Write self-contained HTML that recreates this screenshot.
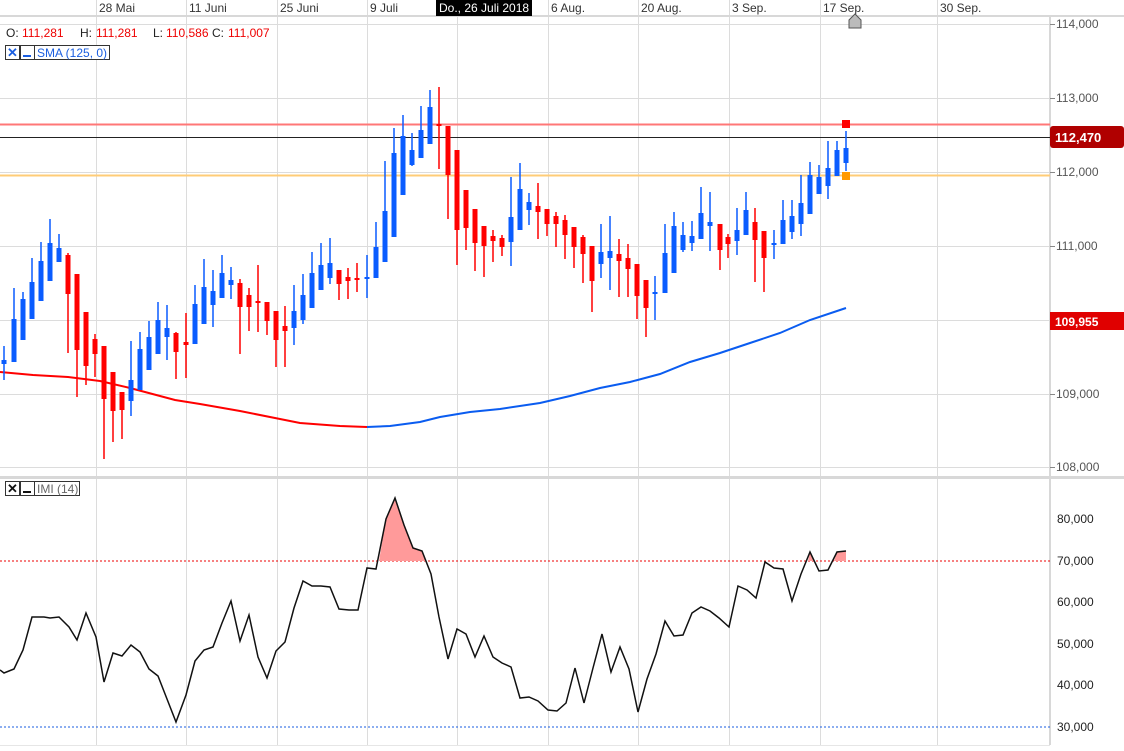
<!DOCTYPE html>
<html><head><meta charset="utf-8"><style>
html,body{margin:0;padding:0;background:#fff;width:1124px;height:751px;overflow:hidden}
svg{display:block;font-family:"Liberation Sans",Arial,sans-serif}
</style></head><body>
<svg id="c" width="1124" height="751" viewBox="0 0 1124 751" xmlns="http://www.w3.org/2000/svg">
<rect width="1124" height="751" fill="#fff"/>
<g stroke="#dcdcdc" stroke-width="1">
<line x1="96.5" y1="0" x2="96.5" y2="745"/><line x1="186.5" y1="0" x2="186.5" y2="745"/><line x1="277.5" y1="0" x2="277.5" y2="745"/><line x1="367.5" y1="0" x2="367.5" y2="745"/><line x1="457.5" y1="16" x2="457.5" y2="745"/><line x1="548.5" y1="0" x2="548.5" y2="745"/><line x1="638.5" y1="0" x2="638.5" y2="745"/><line x1="729.5" y1="0" x2="729.5" y2="745"/><line x1="820.5" y1="0" x2="820.5" y2="745"/><line x1="937.5" y1="0" x2="937.5" y2="745"/>
<line x1="0" y1="24.5" x2="1050" y2="24.5"/><line x1="0" y1="98.5" x2="1050" y2="98.5"/><line x1="0" y1="172.5" x2="1050" y2="172.5"/><line x1="0" y1="246.5" x2="1050" y2="246.5"/><line x1="0" y1="320.5" x2="1050" y2="320.5"/><line x1="0" y1="394.5" x2="1050" y2="394.5"/><line x1="0" y1="467.5" x2="1050" y2="467.5"/>
</g>
<line x1="0" y1="16" x2="1124" y2="16" stroke="#d8d8d8" stroke-width="2"/>
<line x1="0" y1="477.5" x2="1124" y2="477.5" stroke="#d8d8d8" stroke-width="3"/>
<line x1="1050" y1="16" x2="1050" y2="745" stroke="#d8d8d8" stroke-width="2"/>
<g fill="#333" font-size="12">
<text x="99" y="12">28 Mai</text><text x="189" y="12">11 Juni</text><text x="280" y="12">25 Juni</text><text x="370" y="12">9 Juli</text><text x="551" y="12">6 Aug.</text><text x="641" y="12">20 Aug.</text><text x="732" y="12">3 Sep.</text><text x="823" y="12">17 Sep.</text><text x="940" y="12">30 Sep.</text>
</g>
<rect x="436" y="0" width="96" height="16" fill="#000"/>
<text x="439" y="12" fill="#fff" font-size="12">Do., 26 Juli 2018</text>
<path d="M849 28 V20 L855 14 L861 20 V28 Z" fill="#bbb" stroke="#555"/>
<g font-size="12" fill="#555">
<text x="1056" y="28">114,000</text><text x="1056" y="102">113,000</text><text x="1056" y="176">112,000</text><text x="1056" y="250">111,000</text><text x="1056" y="398">109,000</text><text x="1056" y="471">108,000</text>
</g>
<g stroke="#888"><line x1="1050" y1="24.5" x2="1055" y2="24.5"/><line x1="1050" y1="98.5" x2="1055" y2="98.5"/><line x1="1050" y1="172.5" x2="1055" y2="172.5"/><line x1="1050" y1="246.5" x2="1055" y2="246.5"/><line x1="1050" y1="394.5" x2="1055" y2="394.5"/><line x1="1050" y1="467.5" x2="1055" y2="467.5"/></g>
<line x1="0" y1="124.5" x2="1050" y2="124.5" stroke="#f77" stroke-width="2"/>
<line x1="0" y1="137.5" x2="1050" y2="137.5" stroke="#222" stroke-width="1"/>
<line x1="0" y1="175.5" x2="1050" y2="175.5" stroke="#fc7" stroke-width="2"/>
<rect x="1050" y="126" width="74" height="22" rx="3" fill="#b00000"/>
<text x="1055" y="142" fill="#fff" font-size="13" font-weight="bold">112,470</text>
<rect x="1050" y="312" width="74" height="18" fill="#e00000"/>
<text x="1055" y="326" fill="#fff" font-size="12" font-weight="bold">109,955</text>
<polyline fill="none" stroke="#f00" stroke-width="2" points="0,372 33,375 68,377 100,381 130,388 175,400 200,404 240,411 275,418 300,423 340,426 367,427"/>
<polyline fill="none" stroke="#0a5cf0" stroke-width="2" points="367,427 390,426 420,422 440,417 470,412 500,409 540,403 570,396 600,388 630,382 660,374 690,362 720,353 750,343 780,333 810,320 846,308"/>
<g id="candles"></g>
<rect x="842" y="120" width="8" height="8" fill="#f00"/>
<rect x="842" y="172" width="8" height="8" fill="#f90"/>
<g font-size="12">
<text x="6" y="37" fill="#222">O:</text><text x="22" y="37" fill="#e00">111,281</text>
<text x="80" y="37" fill="#222">H:</text><text x="96" y="37" fill="#e00">111,281</text>
<text x="153" y="37" fill="#222">L:</text><text x="166" y="37" fill="#e00">110,586</text>
<text x="212" y="37" fill="#222">C:</text><text x="228" y="37" fill="#e00">111,007</text>
</g>
<rect x="5.5" y="45.5" width="14" height="14" fill="#fff" stroke="#333"/>
<text x="7" y="57" fill="#1a5ee0" font-size="13" font-weight="bold">✕</text>
<rect x="20.5" y="45.5" width="14" height="14" fill="#fff" stroke="#333"/>
<rect x="23" y="55" width="8" height="2" fill="#1a5ee0"/>
<rect x="34.5" y="45.5" width="75" height="14" fill="#fff" stroke="#333"/>
<text x="37" y="57" fill="#1a5ee0" font-size="12">SMA (125, 0)</text>
<line x1="0" y1="561" x2="1050" y2="561" stroke="#e00" stroke-dasharray="2,2"/>
<line x1="0" y1="727" x2="1050" y2="727" stroke="#1a5ee0" stroke-dasharray="2,2"/>
<polygon fill="#ff9a9a" points="379,561 386,519 395,498 404,525 413,548 422,551 426,561"/>
<polygon fill="#ff9a9a" points="808,561 810,552 814,561"/>
<polygon fill="#ff9a9a" points="834,561 837,552 846,551 846,561"/>
<polyline fill="none" stroke="#111" stroke-width="1.5" points="0,670 4,673 14,669 23,650 32,617 44,617 50,618 59,617 69,627 77,640 86,613 96,637 104,682 113,653 122,656 131,645 140,652 149,669 158,676 167,699 176,722 186,695 195,661 204,650 213,647 222,623 231,601 240,641 249,615 258,657 267,678 276,651 285,642 294,608 303,581 312,586 321,586 330,587 339,609 349,610 358,610 367,568 376,569 386,519 395,498 404,525 413,548 422,551 431,574 439,617 448,659 457,629 466,634 475,657 484,636 493,657 502,663 511,667 520,698 529,697 538,701 548,710 557,711 566,703 575,668 584,703 593,668 602,634 611,672 620,647 629,669 638,712 647,679 656,654 665,621 674,636 683,635 692,613 701,607 710,611 719,618 729,627 738,586 747,590 756,598 765,562 774,568 783,569 792,601 801,574 810,552 819,571 828,570 837,552 846,551"/>
<rect x="5.5" y="481.5" width="14" height="14" fill="#fff" stroke="#333"/>
<text x="7" y="493" fill="#111" font-size="13" font-weight="bold">✕</text>
<rect x="20.5" y="481.5" width="14" height="14" fill="#fff" stroke="#333"/>
<rect x="23" y="491" width="8" height="2" fill="#111"/>
<rect x="34.5" y="481.5" width="45" height="14" fill="#fff" stroke="#333"/>
<text x="37" y="493" fill="#666" font-size="12">IMI (14)</text>
<g font-size="12" fill="#222">
<text x="1057" y="523">80,000</text><text x="1057" y="565">70,000</text><text x="1057" y="606">60,000</text><text x="1057" y="648">50,000</text><text x="1057" y="689">40,000</text><text x="1057" y="731">30,000</text>
</g>
<line x1="0" y1="745.5" x2="1050" y2="745.5" stroke="#e6e6e6"/>
</svg>
<script>
var d=[[4,'B',360,364,346,380],[14,'B',319,362,288,362],[23,'B',299,340,292,340],[32,'B',282,319,258,319],[41,'B',261,301,242,301],[50,'B',243,281,219,281],[59,'B',248,262,234,262],[68,'R',255,294,253,353],[77,'R',274,350,274,397],[86,'R',312,366,312,385],[95,'R',339,354,334,377],[104,'R',346,399,346,459],[113,'R',372,411,372,442],[122,'R',392,410,392,439],[131,'B',380,401,341,416],[140,'B',349,390,332,390],[149,'B',337,370,321,370],[158,'B',320,354,302,354],[167,'B',328,337,305,360],[176,'R',333,352,332,379],[186,'R',342,345,313,378],[195,'B',304,344,285,344],[204,'B',287,324,259,324],[213,'B',291,305,270,327],[222,'B',273,298,255,298],[231,'B',280,285,267,299],[240,'R',283,307,279,354],[249,'R',295,307,288,331],[258,'R',301,303,265,332],[267,'R',302,321,302,335],[276,'R',311,340,311,367],[285,'R',326,331,306,367],[294,'B',311,328,285,345],[303,'B',295,320,274,324],[312,'B',273,308,252,308],[321,'B',265,290,243,290],[330,'B',263,278,238,284],[339,'R',270,284,270,300],[348,'R',277,281,268,299],[357,'R',278,280,263,292],[367,'B',277,279,255,298],[376,'B',247,278,222,278],[385,'B',211,262,161,262],[394,'B',153,237,128,237],[403,'B',136,195,115,195],[412,'B',150,165,133,166],[421,'B',130,158,106,158],[430,'B',107,144,90,144],[439,'R',124,126,87,169],[448,'R',126,175,126,219],[457,'R',150,230,150,265],[466,'R',190,228,190,250],[475,'R',209,243,209,271],[484,'R',226,246,226,277],[493,'R',236,241,230,262],[502,'R',238,247,235,256],[511,'B',217,242,177,266],[520,'B',189,230,163,230],[529,'B',202,210,193,225],[538,'R',206,212,183,239],[547,'R',209,224,209,236],[556,'R',216,224,212,247],[565,'R',220,235,215,259],[574,'R',227,247,227,268],[583,'R',237,254,235,283],[592,'R',246,281,246,312],[601,'B',252,264,224,278],[610,'B',251,258,216,290],[619,'R',254,261,239,297],[628,'R',258,269,244,297],[637,'R',264,296,264,319],[646,'R',280,308,280,337],[655,'B',292,294,276,320],[665,'B',253,293,224,293],[674,'B',226,273,212,273],[683,'B',235,250,222,252],[692,'B',236,243,221,251],[701,'B',213,239,187,239],[710,'B',222,226,192,251],[720,'R',224,250,224,270],[728,'R',237,244,234,258],[737,'B',230,241,208,255],[746,'B',210,235,192,235],[755,'R',222,240,208,282],[764,'R',231,258,231,292],[774,'B',243,245,230,259],[783,'B',220,244,200,244],[792,'B',216,232,200,239],[801,'B',203,224,175,236],[810,'B',175,214,162,214],[819,'B',177,194,165,194],[828,'B',168,186,141,199],[837,'B',150,176,141,176],[846,'B',148,163,131,171]];
var s='';
d.forEach(function(c){var col=c[1]=='B'?'#0a5cff':'#ff0000';
s+='<rect x="'+(c[0]-0.75)+'" y="'+c[4]+'" width="1.5" height="'+(c[5]-c[4])+'" fill="'+col+'"/>';
s+='<rect x="'+(c[0]-2.5)+'" y="'+c[2]+'" width="5" height="'+Math.max(2,c[3]-c[2])+'" fill="'+col+'"/>';});
document.getElementById('candles').innerHTML=s;
</script>
</body></html>
